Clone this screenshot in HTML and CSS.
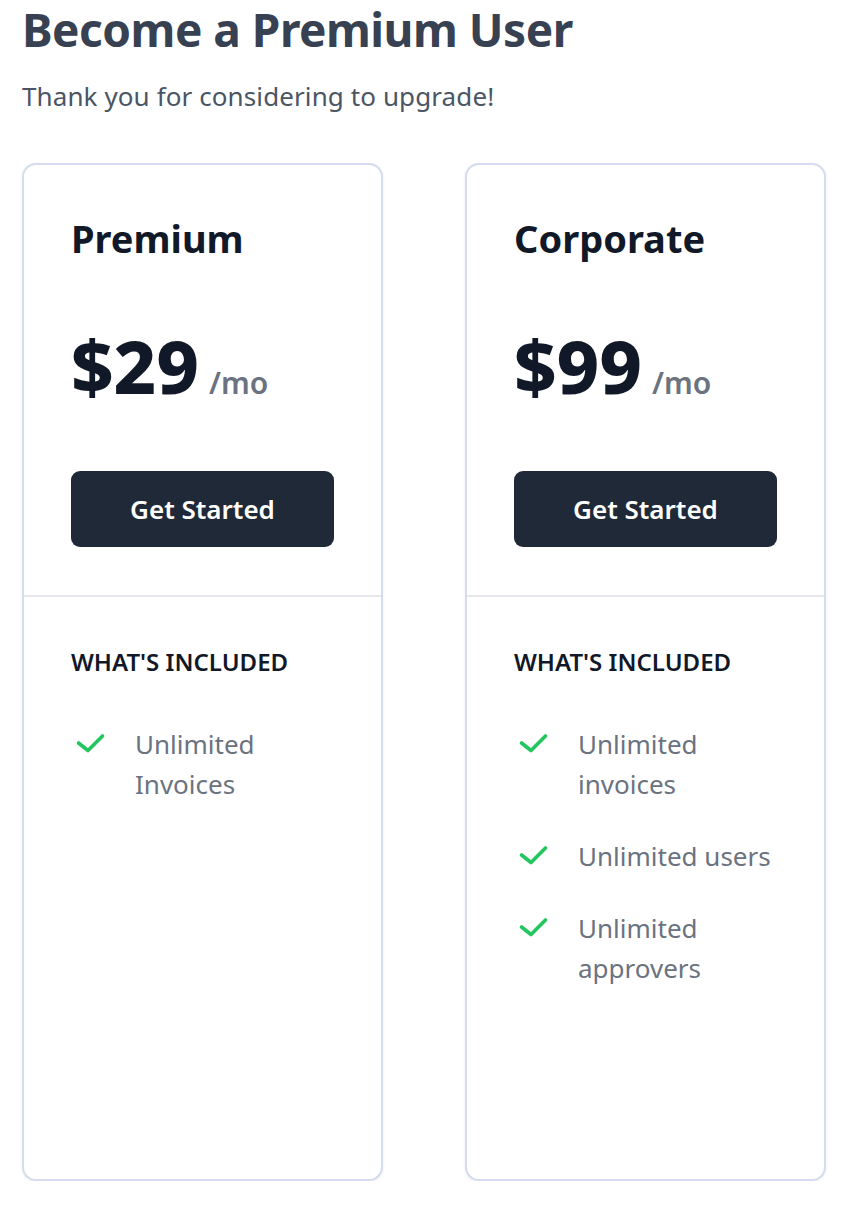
FILE: index.html
```html
<!DOCTYPE html>
<html lang="en">
<head>
<meta charset="utf-8">
<title>Become a Premium User</title>
<link rel="stylesheet" href="styles.css">
</head>
<body>
<main class="page">
  <h1 class="page-title">Become a Premium User</h1>
  <p class="page-subtitle">Thank you for considering to upgrade!</p>

  <div class="plans">
    <section class="plan">
      <div class="plan-top">
        <h2 class="plan-name">Premium</h2>
        <div class="plan-price"><span class="amount">$29</span><span class="period">/mo</span></div>
        <button class="plan-button" type="button">Get Started</button>
      </div>
      <div class="plan-bottom">
        <h3 class="included">WHAT'S INCLUDED</h3>
        <ul class="features">
          <li class="feature">
            <span class="feature-icon"><svg width="32" height="24" viewBox="0 0 32 24" fill="none" stroke="#22c55e" stroke-width="3.6" stroke-linecap="round" stroke-linejoin="round"><polyline points="3.5,13 13,20.5 27.5,6"/></svg></span>
            <span class="feature-text">Unlimited Invoices</span>
          </li>
        </ul>
      </div>
    </section>

    <section class="plan">
      <div class="plan-top">
        <h2 class="plan-name">Corporate</h2>
        <div class="plan-price"><span class="amount">$99</span><span class="period">/mo</span></div>
        <button class="plan-button" type="button">Get Started</button>
      </div>
      <div class="plan-bottom">
        <h3 class="included">WHAT'S INCLUDED</h3>
        <ul class="features">
          <li class="feature">
            <span class="feature-icon"><svg width="32" height="24" viewBox="0 0 32 24" fill="none" stroke="#22c55e" stroke-width="3.6" stroke-linecap="round" stroke-linejoin="round"><polyline points="3.5,13 13,20.5 27.5,6"/></svg></span>
            <span class="feature-text">Unlimited invoices</span>
          </li>
          <li class="feature">
            <span class="feature-icon"><svg width="32" height="24" viewBox="0 0 32 24" fill="none" stroke="#22c55e" stroke-width="3.6" stroke-linecap="round" stroke-linejoin="round"><polyline points="3.5,13 13,20.5 27.5,6"/></svg></span>
            <span class="feature-text">Unlimited users</span>
          </li>
          <li class="feature">
            <span class="feature-icon"><svg width="32" height="24" viewBox="0 0 32 24" fill="none" stroke="#22c55e" stroke-width="3.6" stroke-linecap="round" stroke-linejoin="round"><polyline points="3.5,13 13,20.5 27.5,6"/></svg></span>
            <span class="feature-text">Unlimited approvers</span>
          </li>
        </ul>
      </div>
    </section>
  </div>
</main>
</body>
</html>
```

FILE: styles.css
```css
* { box-sizing: border-box; }

html, body {
  margin: 0;
  padding: 0;
  background: #ffffff;
}

body {
  font-family: "Noto Sans", "Open Sans", "Liberation Sans", sans-serif;
  color: #111827;
}

.page {
  padding: 1px 0 0 22px;
}

.page-title {
  margin: 0;
  font-size: 46px;
  line-height: 56px;
  font-weight: 700;
  color: #374151;
  letter-spacing: -0.5px;
}

.page-subtitle {
  margin: 21px 0 0;
  font-size: 26px;
  line-height: 36px;
  font-weight: 400;
  color: #4b5563;
  letter-spacing: 0.1px;
}

.plans {
  margin-top: 49px;
  display: grid;
  grid-template-columns: 361px 361px;
  column-gap: 82px;
}

.plan {
  height: 1018px;
  border: 2px solid #d5dcef;
  border-radius: 14px;
  background: #ffffff;
  box-shadow: 0 1px 3px rgba(30, 41, 59, 0.08);
  overflow: hidden;
}

.plan-top {
  padding: 49px 47px 48px;
  border-bottom: 2px solid #e5e7eb;
}

.plan-name {
  margin: 0;
  font-size: 38px;
  line-height: 48px;
  font-weight: 700;
  color: #111827;
}

.plan-price {
  margin-top: 68px;
  display: flex;
  align-items: baseline;
}

.amount {
  font-size: 74px;
  line-height: 72px;
  font-weight: 800;
  color: #111827;
}

.period {
  margin-left: 10px;
  font-size: 30px;
  font-weight: 600;
  color: #6b7280;
}

.plan-button {
  margin-top: 68px;
  width: 100%;
  height: 76px;
  display: flex;
  align-items: center;
  justify-content: center;
  border: none;
  border-radius: 9px;
  background: #1f2937;
  color: #ffffff;
  font-family: inherit;
  font-size: 26px;
  font-weight: 600;
  cursor: pointer;
}

.plan-bottom {
  padding: 49px 47px 0;
}

.included {
  margin: 0;
  font-size: 24px;
  line-height: 32px;
  font-weight: 600;
  letter-spacing: 0;
  color: #111827;
}

.features {
  list-style: none;
  margin: 46px 0 0;
  padding: 0;
  display: flex;
  flex-direction: column;
  gap: 32px;
}

.feature {
  display: flex;
  align-items: flex-start;
}

.feature-icon {
  flex: 0 0 64px;
  padding: 6px 0 0 4px;
  display: flex;
}

.feature-text {
  font-size: 26px;
  line-height: 40px;
  color: #6b7280;
}
```
